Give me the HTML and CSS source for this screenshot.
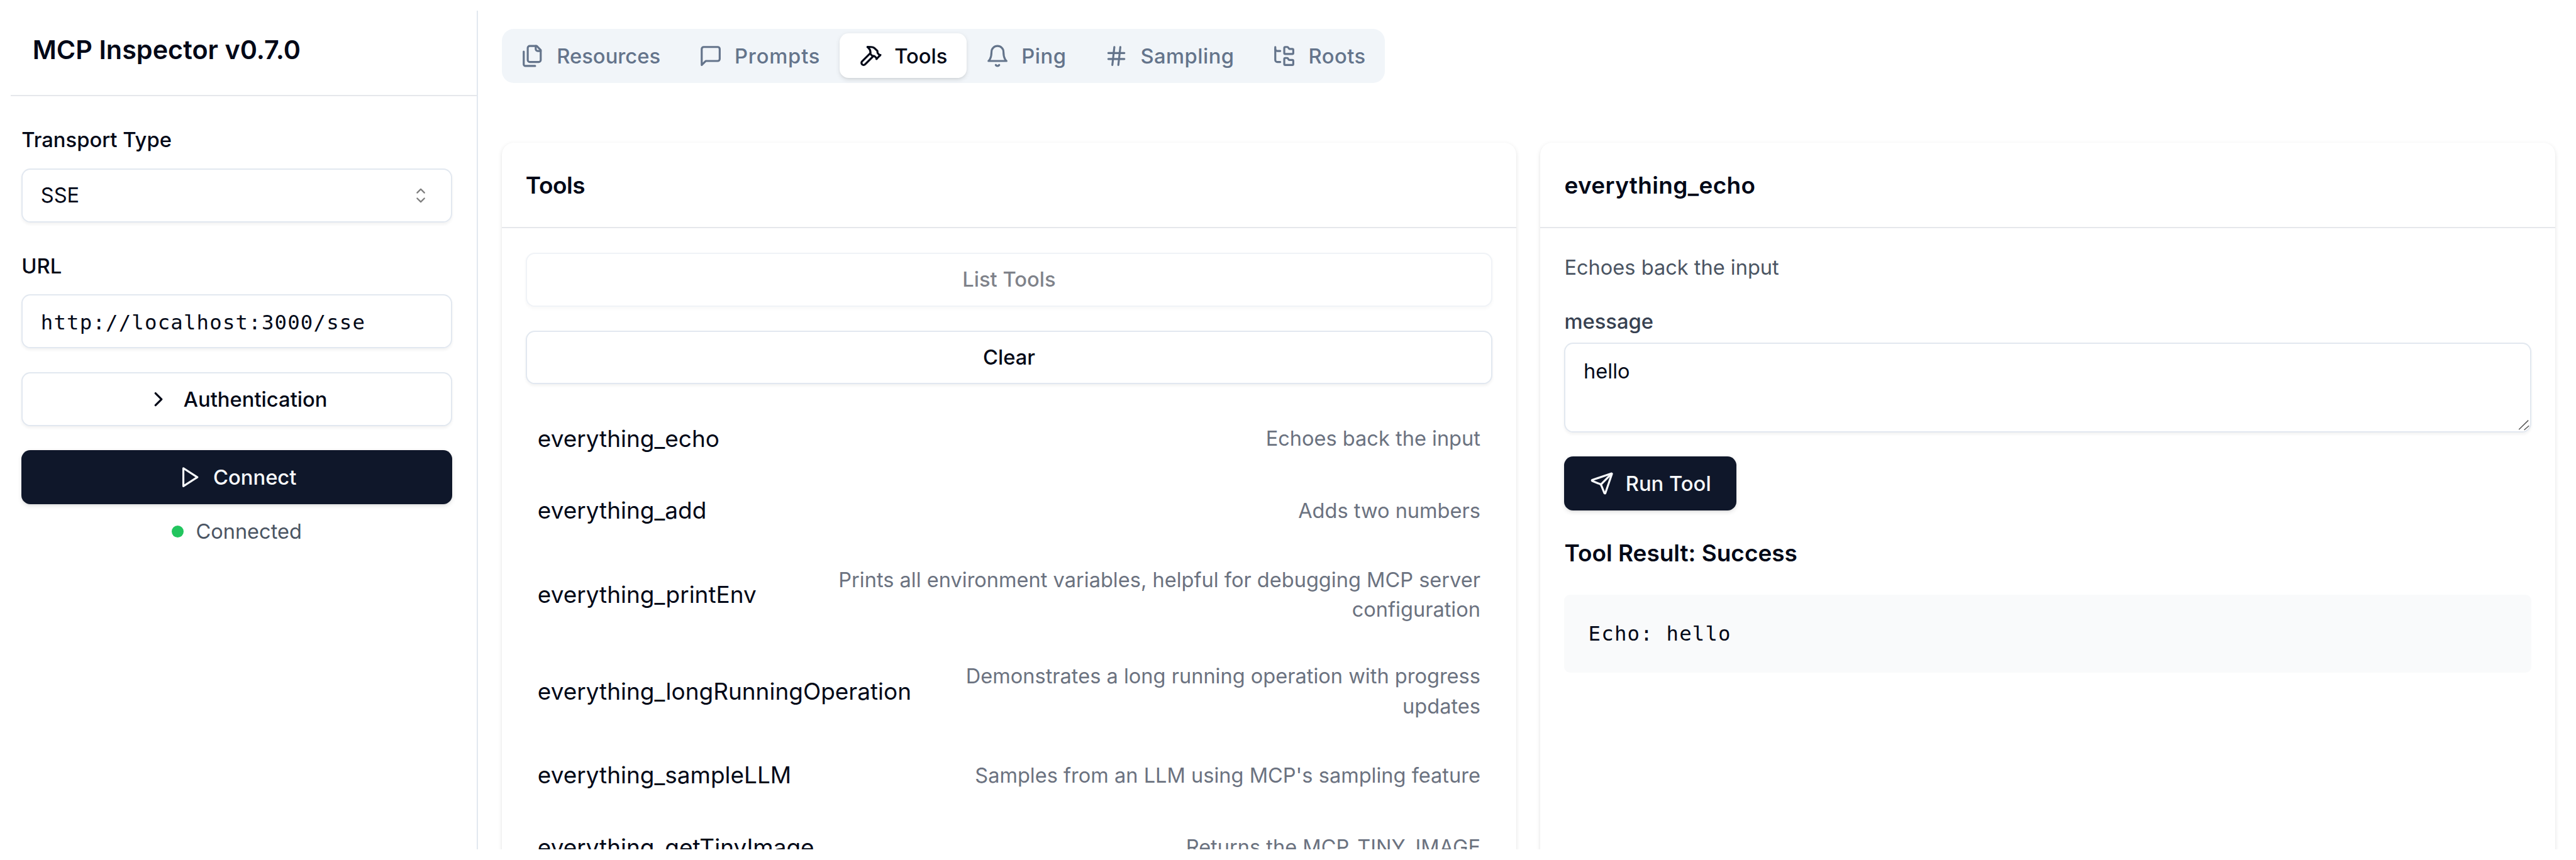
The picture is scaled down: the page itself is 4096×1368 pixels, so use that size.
FILE: index.html
```html
<!DOCTYPE html>
<html lang="en">
<head>
<meta charset="utf-8">
<title>MCP Inspector</title>
<link rel="stylesheet" href="styles.css">
</head>
<body>
<div class="app">
  <aside class="sidebar">
    <header class="sidebar-header"><h1 class="sidebar-title">MCP Inspector v0.7.0</h1></header>
    <div class="sidebar-body">
      <label class="label">Transport Type</label>
      <div class="control select">
        <span>SSE</span>
        <svg class="icon caret" viewBox="0 0 15 15"><path fill="currentColor" d="M4.932 5.432a.45.45 0 0 0 .636.636L7.5 4.136l1.932 1.932a.45.45 0 0 0 .636-.636l-2.25-2.25a.45.45 0 0 0-.636 0ZM10.068 9.568a.45.45 0 0 0-.636-.636L7.5 10.864 5.568 8.932a.45.45 0 0 0-.636.636l2.25 2.25a.45.45 0 0 0 .636 0Z"/></svg>
      </div>
      <label class="label label-url">URL</label>
      <div class="control mono"><span class="url">http://localhost:3000/sse</span></div>
      <button class="button outline auth">
        <svg class="icon line" viewBox="0 0 24 24"><path d="m9 18 6-6-6-6"/></svg>
        <span>Authentication</span>
      </button>
      <button class="button primary">
        <svg class="icon line" viewBox="0 0 24 24"><path d="M6 3 20 12 6 21Z"/></svg>
        <span>Connect</span>
      </button>
      <div class="status"><span class="dot"></span><span>Connected</span></div>
    </div>
  </aside>

  <main class="main">
    <nav class="tabs">
      <button class="tab">
        <svg class="icon line" viewBox="0 0 24 24"><path d="M20 7h-3a2 2 0 0 1-2-2V2"/><path d="M9 18a2 2 0 0 1-2-2V4a2 2 0 0 1 2-2h7l4 4v10a2 2 0 0 1-2 2Z"/><path d="M3 7.6v12.8A1.6 1.6 0 0 0 4.6 22h9.8"/></svg>
        <span>Resources</span>
      </button>
      <button class="tab wider">
        <svg class="icon line" viewBox="0 0 24 24"><path d="M21 15a2 2 0 0 1-2 2H7l-4 4V5a2 2 0 0 1 2-2h14a2 2 0 0 1 2 2z"/></svg>
        <span>Prompts</span>
      </button>
      <button class="tab active">
        <svg class="icon line" viewBox="0 0 24 24"><path d="m15 12-8.373 8.373a1 1 0 1 1-3-3L12 9"/><path d="m18 15 4-4"/><path d="m21.5 11.5-1.914-1.914A2 2 0 0 1 19 8.172V7l-2.26-2.26a6 6 0 0 0-4.202-1.756L9 2.96l.92.82A6.18 6.18 0 0 1 12 8.4V10l2 2h1.172a2 2 0 0 1 1.414.586L18.5 14.5"/></svg>
        <span>Tools</span>
      </button>
      <button class="tab wide">
        <svg class="icon line" viewBox="0 0 24 24"><path d="M6 8a6 6 0 0 1 12 0c0 7 3 9 3 9H3s3-2 3-9"/><path d="M10.3 21a1.94 1.94 0 0 0 3.4 0"/></svg>
        <span>Ping</span>
      </button>
      <button class="tab wide">
        <svg class="icon line" viewBox="0 0 24 24"><path d="M4 9h16M4 15h16M10 3 8 21M16 3l-2 18"/></svg>
        <span>Sampling</span>
      </button>
      <button class="tab wide">
        <svg class="icon line" viewBox="0 0 24 24"><path d="M20 10a1 1 0 0 0 1-1V6a1 1 0 0 0-1-1h-2.5a1 1 0 0 1-.8-.4l-.9-1.2A1 1 0 0 0 15 3h-2a1 1 0 0 0-1 1v5a1 1 0 0 0 1 1Z"/><path d="M20 21a1 1 0 0 0 1-1v-3a1 1 0 0 0-1-1h-2.9a1 1 0 0 1-.88-.55l-.42-.85a1 1 0 0 0-.92-.6H13a1 1 0 0 0-1 1v5a1 1 0 0 0 1 1Z"/><path d="M3 5a2 2 0 0 0 2 2h3"/><path d="M3 3v13a2 2 0 0 0 2 2h3"/></svg>
        <span>Roots</span>
      </button>
    </nav>

    <div class="panels">
      <section class="card">
        <header class="card-header"><h3 class="card-title tight">Tools</h3></header>
        <div class="card-body">
          <button class="button outline" disabled><span>List Tools</span></button>
          <button class="button outline"><span>Clear</span></button>
          <ul class="tools">
            <li class="tool"><span class="tool-name">everything_echo</span><span class="tool-text">Echoes back the input</span></li>
            <li class="tool"><span class="tool-name">everything_add</span><span class="tool-text">Adds two numbers</span></li>
            <li class="tool"><span class="tool-name">everything_printEnv</span><span class="tool-text">Prints all environment variables, helpful for debugging MCP server configuration</span></li>
            <li class="tool"><span class="tool-name">everything_longRunningOperation</span><span class="tool-text">Demonstrates a long running operation with progress updates</span></li>
            <li class="tool"><span class="tool-name">everything_sampleLLM</span><span class="tool-text">Samples from an LLM using MCP's sampling feature</span></li>
            <li class="tool"><span class="tool-name">everything_getTinyImage</span><span class="tool-text">Returns the MCP_TINY_IMAGE</span></li>
          </ul>
        </div>
      </section>

      <section class="card">
        <header class="card-header"><h3 class="card-title loose">everything_echo</h3></header>
        <div class="card-body">
          <p class="description">Echoes back the input</p>
          <div class="field">
            <label class="field-label">message</label>
            <div class="textarea">hello
              <svg class="grip" viewBox="0 0 18 18"><path d="M1.2 16.2 16.2 1.6M9.6 17 17.2 10.2"/></svg>
            </div>
          </div>
          <button class="button primary run">
            <svg class="icon line" viewBox="0 0 24 24"><path d="M14.536 21.686a.5.5 0 0 0 .937-.024l6.5-19a.496.496 0 0 0-.635-.635l-19 6.5a.5.5 0 0 0-.024.937l7.93 3.18a2 2 0 0 1 1.112 1.11z"/><path d="m21.854 2.147-10.94 10.939"/></svg>
            <span>Run Tool</span>
          </button>
          <h4 class="result-title">Tool Result: Success</h4>
          <pre class="result mono">Echo: hello</pre>
        </div>
      </section>
    </div>
  </main>
</div>
</body>
</html>
```

FILE: styles.css
```css
:root {
  --u: 2.3847px;
  --fg: #020817;
  --muted: #64748b;
  --line: #e2e8f0;
  --primary: #0f172a;
}

* { box-sizing: border-box; margin: 0; padding: 0; }

html, body { height: 100%; overflow: hidden; }

body {
  padding: calc(var(--u) * 7.2) 0 calc(var(--u) * 7.2) calc(var(--u) * 7.3);
  background: #fff;
  color: var(--fg);
  font: 400 calc(var(--u) * 13.65) / calc(var(--u) * 20) Inter, "Liberation Sans", sans-serif;
}

button { border: 0; background: none; color: inherit; font: inherit; }
ul { list-style: none; }

.app { display: flex; height: 100%; overflow: hidden; }

.icon { flex: none; width: calc(var(--u) * 16); height: calc(var(--u) * 16); }
.line {
  fill: none;
  stroke: currentColor;
  stroke-width: 2;
  stroke-linecap: round;
  stroke-linejoin: round;
}

.mono {
  font-family: "DejaVu Sans Mono", "Liberation Mono", monospace;
  font-size: calc(var(--u) * 13.58);
  letter-spacing: 0.0358em;
}

/* Sidebar */
.sidebar {
  flex: none;
  width: calc(var(--u) * 311.2);
  border-right: calc(var(--u) * 1) solid var(--line);
}
.sidebar-header {
  height: calc(var(--u) * 57);
  padding: calc(var(--u) * 11.9) 0 0 calc(var(--u) * 14.4);
  border-bottom: calc(var(--u) * 1) solid #e5e7eb;
}
.sidebar-title {
  font-size: calc(var(--u) * 17.34);
  line-height: calc(var(--u) * 28);
  font-weight: 600;
}
.sidebar-body {
  display: flex;
  flex-direction: column;
  width: calc(var(--u) * 294.2);
  padding: calc(var(--u) * 19.2) 0 0 calc(var(--u) * 7.05);
}
.label { margin-bottom: calc(var(--u) * 8.9); font-size: calc(var(--u) * 13.73); font-weight: 500; }
.label-url { margin-top: calc(var(--u) * 19.3); margin-bottom: calc(var(--u) * 8.8); }

.control {
  display: flex;
  align-items: center;
  height: calc(var(--u) * 36);
  padding: 0 calc(var(--u) * 12);
  border: calc(var(--u) * 1) solid var(--line);
  border-radius: calc(var(--u) * 6);
  box-shadow: 0 calc(var(--u) * 1) calc(var(--u) * 2) rgba(0, 0, 0, 0.05);
}
.control span { padding-top: calc(var(--u) * 0.4); }
.control .url { padding-top: calc(var(--u) * 2.3); }
.select { justify-content: space-between; }
.caret { opacity: 0.5; color: #000; }

.button {
  display: flex;
  align-items: center;
  justify-content: center;
  gap: calc(var(--u) * 8);
  height: calc(var(--u) * 36);
  border-radius: calc(var(--u) * 6);
  font-size: calc(var(--u) * 13.73);
  font-weight: 500;
  white-space: nowrap;
}
.button span { padding-top: calc(var(--u) * 0.5); }
.sidebar .button { margin-top: calc(var(--u) * 16); }
.outline {
  border: calc(var(--u) * 1) solid var(--line);
  background: #fff;
  box-shadow: 0 calc(var(--u) * 1) calc(var(--u) * 2) rgba(0, 0, 0, 0.05);
}
.outline:disabled { opacity: 0.5; }
.primary {
  background: var(--primary);
  color: #f8fafc;
  box-shadow: 0 calc(var(--u) * 1) calc(var(--u) * 3) rgba(0, 0, 0, 0.1), 0 calc(var(--u) * 1) calc(var(--u) * 2) calc(var(--u) * -1) rgba(0, 0, 0, 0.1);
}
.auth { gap: calc(var(--u) * 8.8); }
.run { align-self: flex-start; padding: 0 calc(var(--u) * 16.8); }

.status {
  display: flex;
  align-items: center;
  justify-content: center;
  gap: calc(var(--u) * 8);
  margin-top: calc(var(--u) * 8.3);
  color: #4b5563;
}
.dot {
  width: calc(var(--u) * 8);
  height: calc(var(--u) * 8);
  border-radius: 50%;
  background: #22c55e;
}

/* Main column */
.main {
  width: calc(var(--u) * 1385.2);
  padding: calc(var(--u) * 12) 0 0 calc(var(--u) * 16);
}
.tabs {
  display: flex;
  align-items: center;
  width: calc(var(--u) * 588.9);
  height: calc(var(--u) * 36);
  border-radius: calc(var(--u) * 8);
  background: #f1f5f9;
  color: var(--muted);
}
.tab {
  display: flex;
  flex: 1 1 auto;
  align-items: center;
  justify-content: center;
  gap: calc(var(--u) * 8);
  height: calc(var(--u) * 30);
  padding: 0 calc(var(--u) * 12);
  border-radius: calc(var(--u) * 6);
  font-size: calc(var(--u) * 13.73);
  font-weight: 500;
}
.tab span { padding-top: calc(var(--u) * 0.6); }
.wide { letter-spacing: 0.014em; }
.wider { letter-spacing: 0.024em; }
.active {
  background: #fff;
  color: var(--fg);
  box-shadow: 0 calc(var(--u) * 1) calc(var(--u) * 3) rgba(0, 0, 0, 0.1), 0 calc(var(--u) * 1) calc(var(--u) * 2) calc(var(--u) * -1) rgba(0, 0, 0, 0.1);
}

.panels {
  display: grid;
  grid-template-columns: 1fr 1fr;
  gap: calc(var(--u) * 16);
  height: calc(var(--u) * 520);
  margin-top: calc(var(--u) * 40);
}
.card {
  border-radius: calc(var(--u) * 8);
  background: #fff;
  box-shadow: 0 calc(var(--u) * 1) calc(var(--u) * 3) rgba(0, 0, 0, 0.1), 0 calc(var(--u) * 1) calc(var(--u) * 2) calc(var(--u) * -1) rgba(0, 0, 0, 0.1);
}
.card-header {
  height: calc(var(--u) * 57);
  padding: calc(var(--u) * 16.5) calc(var(--u) * 16) 0;
  border-bottom: calc(var(--u) * 1) solid #e5e7eb;
}
.card-title, .result-title {
  font-size: calc(var(--u) * 15.5);
  line-height: calc(var(--u) * 24);
  font-weight: 600;
}
.tight { letter-spacing: -0.011em; }
.loose { letter-spacing: 0.0097em; }
.card-body {
  display: flex;
  flex-direction: column;
  gap: calc(var(--u) * 16);
  padding: calc(var(--u) * 16.25) calc(var(--u) * 16) 0;
}

.tools {
  display: flex;
  flex-direction: column;
  gap: calc(var(--u) * 8);
  margin-top: calc(var(--u) * 0.15);
}
.tool {
  display: flex;
  align-items: center;
  justify-content: space-between;
  padding: calc(var(--u) * 8);
}
.tool-name {
  flex: none;
  font-size: calc(var(--u) * 15.5);
  line-height: calc(var(--u) * 24);
}
.tool-text {
  padding-top: calc(var(--u) * 0.3);
  color: #6b7280;
  text-align: right;
}

.description { padding-top: calc(var(--u) * 0.1); color: #4b5563; }
.field {
  display: flex;
  flex-direction: column;
  gap: calc(var(--u) * 3.6);
}
.field-label {
  padding-top: calc(var(--u) * 0.3);
  color: #374151;
  font-size: calc(var(--u) * 13.73);
  font-weight: 500;
}
.textarea {
  position: relative;
  height: calc(var(--u) * 60);
  padding: calc(var(--u) * 8.5) calc(var(--u) * 12);
  border: calc(var(--u) * 1) solid var(--line);
  border-radius: calc(var(--u) * 6);
  box-shadow: 0 calc(var(--u) * 1) calc(var(--u) * 2) rgba(0, 0, 0, 0.05);
}
.grip {
  position: absolute;
  right: 1px;
  bottom: 1px;
  width: 18px;
  height: 18px;
  fill: none;
  stroke: #555;
  stroke-width: 1.5;
}
.result-title { padding-top: calc(var(--u) * 0.5); margin-bottom: calc(var(--u) * -0.4); }
.result {
  height: calc(var(--u) * 52);
  padding: calc(var(--u) * 16.75) calc(var(--u) * 16) 0;
  border-radius: calc(var(--u) * 4);
  background: #f9fafb;
}
```
